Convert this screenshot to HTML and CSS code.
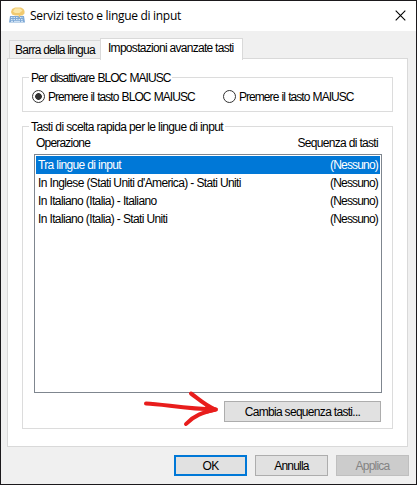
FILE: index.html
```html
<!DOCTYPE html>
<html lang="it">
<head>
<meta charset="utf-8">
<title>Servizi testo e lingue di input</title>
<link rel="stylesheet" href="styles.css">
</head>
<body>
<div class="window">
  <header class="titlebar">
    <svg class="app-icon" width="16" height="17" viewBox="0 0 16 17">
      <path d="M1 9h14l1 6.500H0z" fill="#7fa9d6"/>
      <path d="M2 10.500h7M11 10.500h3M2 12.500h12" stroke="#d6e6f6" stroke-dasharray="1.500 1"/>
      <path d="M2 14.300h2M5 14.300h6M12 14.300h2" stroke="#e1eefb"/>
      <path d="M6 .500h6l2.500 1.500L15.500 4v2.500l-2 2H11.500l-1.700 2.500V8.500H6L3 7.500 2 5l1-3z" fill="#f1ca70"/>
      <path d="M6 1.500h5l2.500 2-3 2.500H6L4 4.500z" fill="#fbe7a9"/>
    </svg>
    <span class="title">Servizi testo e lingue di input</span>
    <svg class="close" width="11" height="11" viewBox="0 0 11 11"><path d="M.7.700l9.600 9.600M10.300.700L.7 10.300" stroke="#000" stroke-width="1.100"/></svg>
  </header>
  <nav class="tabs">
    <div class="tab"><span class="t-bar">Barra della lingua</span></div>
    <div class="tab active"><span class="t-adv">Impostazioni avanzate tasti</span></div>
  </nav>
  <main class="panel">
    <fieldset class="group caps">
      <legend class="t-caps">Per disattivare BLOC MAIUSC</legend>
      <label class="option first"><i class="radio checked"></i><span class="t-caps">Premere il tasto BLOC MAIUSC</span></label>
      <label class="option"><i class="radio"></i><span class="t-caps">Premere il tasto MAIUSC</span></label>
    </fieldset>
    <fieldset class="group keys">
      <legend class="t-keys">Tasti di scelta rapida per le lingue di input</legend>
      <div class="columns"><span class="t-op">Operazione</span><span class="t-seq">Sequenza di tasti</span></div>
      <div class="list">
        <div class="row selected"><span>Tra lingue di input</span><span class="t-none">(Nessuno)</span></div>
        <div class="row"><span>In Inglese (Stati Uniti d'America) - Stati Uniti</span><span class="t-none">(Nessuno)</span></div>
        <div class="row"><span>In Italiano (Italia) - Italiano</span><span class="t-none">(Nessuno)</span></div>
        <div class="row"><span>In Italiano (Italia) - Stati Uniti</span><span class="t-none">(Nessuno)</span></div>
      </div>
      <button class="btn change"><span class="t-change">Cambia sequenza tasti...</span></button>
      <svg class="arrow" width="78" height="40" viewBox="0 0 78 40" fill="none" stroke="#e81d1c" stroke-width="4" stroke-linecap="round" stroke-linejoin="round">
        <path d="M5 14.500C22 15 44 20 74 20.500M50 4.500C57 9.500 63 15.500 74 20.500C62 23.500 53 26.500 45 35"/>
        <path d="M66 18.500L75 20.500L66 22.500Z" fill="#e81d1c"/>
      </svg>
    </fieldset>
  </main>
  <footer class="actions">
    <button class="btn ok"><span>OK</span></button>
    <button class="btn"><span class="t-cancel">Annulla</span></button>
    <button class="btn disabled" disabled><span class="t-cancel">Applica</span></button>
  </footer>
</div>
</body>
</html>
```
FILE: styles.css
```css
* { box-sizing: border-box; }
body {
  margin: 0;
  font: 12px/14px "Liberation Sans", Arial, sans-serif;
  letter-spacing: -0.63px;
  color: #000;
}
span, legend { white-space: nowrap; }
.window {
  width: 417px;
  height: 485px;
  border: 1px solid #1b191c;
  background: #f0f0f0;
  display: flex;
  flex-direction: column;
}
.titlebar {
  height: 30px;
  flex: none;
  background: #fff;
  display: flex;
  align-items: center;
  padding: 0 9px 0 8px;
}
.app-icon { margin-right: 5px; margin-top: -1px; }
.title { font: 12px/16px "Open Sans", sans-serif; letter-spacing: -0.3px; }
.close { margin: 0 1px 1px auto; }
.tabs {
  display: flex;
  align-items: flex-end;
  height: 28px;
  flex: none;
  padding-left: 8px;
  position: relative;
  z-index: 1;
}
.tab {
  width: 91px;
  height: 19px;
  border: 1px solid #d9d9d9;
  border-width: 1px 0 0 1px;
  padding: 2px 0 0 5px;
}
.tab.active {
  width: 143px;
  height: 22px;
  margin-bottom: -1px;
  border-right-width: 1px;
  background: #fff;
  padding: 2px 0 0 7px;
}
.panel {
  margin-left: 6px;
  width: 401px;
  height: 389px;
  margin-top: -1px;
  flex: none;
  background: #fff;
  border: 1px solid #d9d9d9;
  padding: 12px 14px 0;
}
.group {
  margin: 0;
  padding: 0;
  width: 371px;
  min-width: 0;
  border: 1px solid #dcdcdc;
}
legend { margin-left: 6px; padding: 0 2px; height: 13px; }
.caps { height: 41px; display: flex; }
.option { display: flex; align-items: center; height: 13px; margin-top: 6px; }
.option.first { width: 191px; margin-left: 9px; }
.radio {
  width: 13px;
  height: 13px;
  border: 1px solid #333;
  border-radius: 50%;
  margin-right: 3px;
  flex: none;
}
.radio.checked { background: radial-gradient(circle, #333 3px, #fff 3.700px); }
.keys { height: 309px; margin-top: 8px; position: relative; }
.columns { display: flex; justify-content: space-between; padding: 0 14px 0 13px; height: 18px; margin-top: 3px; }
.list {
  margin-left: 11px;
  width: 348px;
  height: 239px;
  border: 1px solid #7f868f;
  padding: 1px;
}
.row {
  display: flex;
  justify-content: space-between;
  align-items: center;
  height: 18px;
  padding: 0 2px;
}
.selected { background: #0078d7; color: #fff; }
.btn {
  width: 73px;
  height: 21px;
  padding: 0;
  border: 1px solid #adadad;
  border-radius: 0;
  background: #e1e1e1;
  color: #000;
  font: inherit;
  letter-spacing: inherit;
  text-align: center;
}
.change { display: block; width: 157px; margin: 8px 0 0 201px; }
.arrow { position: absolute; left: 118px; top: 256px; }
.actions { display: flex; justify-content: flex-end; gap: 8px; padding: 8px 7px 0 0; }
.ok { border: 2px solid #0078d7; }
.disabled { background: #ccc; border-color: #bfbfbf; color: #838383; }
.t-bar { letter-spacing: -0.75px; }
.t-adv { letter-spacing: -0.71px; }
.t-caps { letter-spacing: -0.95px; word-spacing: 0.8px; }
.t-keys { letter-spacing: -0.61px; }
.t-op { letter-spacing: -0.8px; }
.t-seq { letter-spacing: -0.68px; }
.t-none { letter-spacing: -0.82px; }
.t-change { letter-spacing: -0.69px; }
.t-cancel { letter-spacing: -0.8px; }
```
